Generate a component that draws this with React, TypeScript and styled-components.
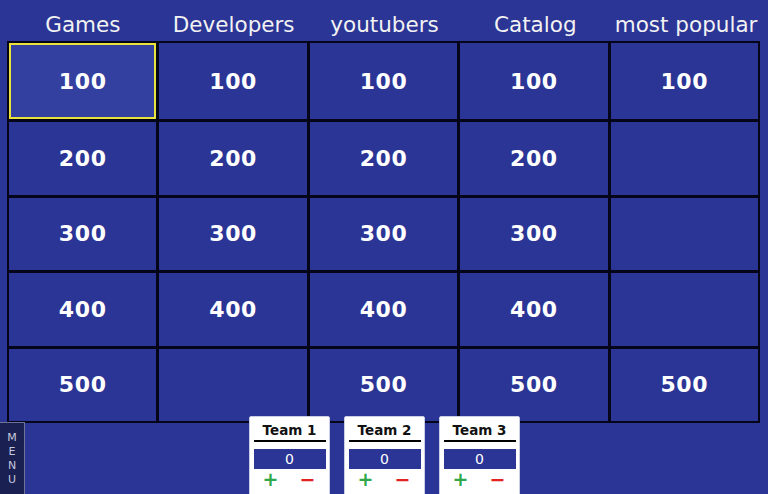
import React from "react";
import styled, { createGlobalStyle } from "styled-components";

const Global = createGlobalStyle`
  html, body { margin: 0; padding: 0; background: #2b3596; overflow: hidden; }
  body { font-family: "DejaVu Sans", Verdana, sans-serif; }
`;

const Page = styled.div`
  width: 768px;
  height: 494px;
  background: #2b3596;
  position: relative;
  overflow: hidden;
`;

const Headers = styled.div`
  display: grid;
  grid-template-columns: repeat(5, 1fr);
  column-gap: 3px;
  margin: 0 8px 0 9px;
  height: 41px;
  align-items: center;
`;

const HeaderCell = styled.div`
  color: #f2f2f2;
  font-size: 21.5px;
  text-align: center;
  white-space: nowrap;
  padding-top: 8px;
`;

const Board = styled.div`
  margin: 0 8px 0 7px;
  background: #05051a;
  padding: 2px;
  display: grid;
  grid-template-columns: repeat(5, 1fr);
  grid-template-rows: 76px repeat(4, 72.5px);
  gap: 3px;
`;

const Cell = styled.div<{ $active?: boolean }>`
  background: ${(p) => (p.$active ? "#3440a0" : "#2b3596")};
  box-shadow: ${(p) => (p.$active ? "inset 0 0 0 2px #e8e23a" : "none")};
  color: #ffffff;
  font-weight: bold;
  font-size: 22px;
  letter-spacing: 0.6px;
  display: flex;
  align-items: center;
  justify-content: center;
`;

const Teams = styled.div`
  display: flex;
  justify-content: center;
  gap: 14px;
  margin-top: -7px;
  position: relative;
`;

const Card = styled.div`
  width: 72px;
  height: 84px;
  background: #ffffff;
  border: 1px solid #c9cde6;
  border-radius: 2px;
  padding: 0 3px 0 4px;
  display: flex;
  flex-direction: column;
`;

const TeamName = styled.div`
  font-weight: bold;
  font-size: 13.5px;
  color: #111;
  text-align: center;
  padding-top: 6px;
  padding-bottom: 2px;
  border-bottom: 2px solid #000;
  line-height: 15px;
`;

const Score = styled.div`
  margin-top: 7px;
  height: 20px;
  background: #2b3596;
  color: #fff;
  font-size: 14px;
  display: flex;
  align-items: center;
  justify-content: center;
`;

const Buttons = styled.div`
  display: flex;
  justify-content: space-between;
  padding: 0 10px 0 9px;
  height: 20px;
  align-items: center;
`;

const Btn = styled.span<{ $color: string }>`
  color: ${(p) => p.$color};
  font-size: 19px;
  font-weight: bold;
  line-height: 1;
`;

const Menu = styled.div`
  position: absolute;
  left: 0;
  bottom: 0;
  width: 25px;
  height: 72px;
  background: #1b2052;
  border-top: 1px solid #6f7496;
  border-right: 1px solid #6f7496;
  display: flex;
  flex-direction: column;
  align-items: center;
  padding-top: 8px;
  box-sizing: border-box;
`;

const MenuLetter = styled.span`
  color: #c4c8dc;
  font-size: 11px;
  line-height: 14px;
`;

const headers = ["Games", "Developers", "youtubers", "Catalog", "most popular"];
const rows: (string | null)[][] = [
  ["100", "100", "100", "100", "100"],
  ["200", "200", "200", "200", null],
  ["300", "300", "300", "300", null],
  ["400", "400", "400", "400", null],
  ["500", null, "500", "500", "500"],
];

export default function App() {
  return (
    <Page>
      <Global />
      <Headers>
        {headers.map((h) => (
          <HeaderCell key={h}>{h}</HeaderCell>
        ))}
      </Headers>
      <Board>
        {rows.map((r, ri) =>
          r.map((v, ci) => (
            <Cell key={`${ri}-${ci}`} $active={ri === 0 && ci === 0}>
              {v}
            </Cell>
          ))
        )}
      </Board>
      <Teams>
        {["Team 1", "Team 2", "Team 3"].map((t) => (
          <Card key={t}>
            <TeamName>{t}</TeamName>
            <Score>0</Score>
            <Buttons>
              <Btn $color="#2ea84a">+</Btn>
              <Btn $color="#e52222">−</Btn>
            </Buttons>
          </Card>
        ))}
      </Teams>
      <Menu>
        {"MENU".split("").map((l, i) => (
          <MenuLetter key={i}>{l}</MenuLetter>
        ))}
      </Menu>
    </Page>
  );
}
